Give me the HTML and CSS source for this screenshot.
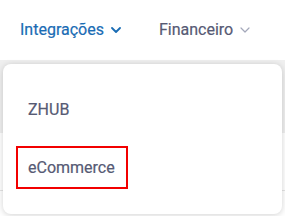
FILE: index.html
```html
<!DOCTYPE html>
<html lang="pt-BR">
<head>
  <meta charset="UTF-8" />
  <title>Menu Integrações</title>
  <link rel="stylesheet" href="styles.css">
</head>
<body>

  <nav class="topnav">
    <div class="nav-item active">
      Integrações
      <svg class="chevron" width="10" height="6" viewBox="0 0 10 6"><path d="M1 1l4 4 4-4" fill="none" stroke="currentColor" stroke-width="1.8" stroke-linecap="round" stroke-linejoin="round"/></svg>
    </div>
    <div class="nav-item">
      Financeiro
      <svg class="chevron light" width="10" height="6" viewBox="0 0 10 6"><path d="M1 1l4 4 4-4" fill="none" stroke="currentColor" stroke-width="1.2" stroke-linecap="round" stroke-linejoin="round"/></svg>
    </div>
  </nav>

  <div class="page">
    <div class="table-head"></div>
    <div class="table-row"></div>

    <div class="dropdown">
      <a class="menu-item">ZHUB</a>
      <a class="menu-item selected">eCommerce</a>
    </div>
  </div>

</body>
</html>
```

FILE: styles.css
```css
body {
  margin: 0;
  background: #fff;
  font-family: Roboto, "Noto Sans", sans-serif;
  overflow: hidden;
}

.topnav {
  display: flex;
  align-items: center;
  gap: 38px;
  padding: 9px 0 0 20px;
  height: 49px;
  box-sizing: border-box;
}

.nav-item {
  display: flex;
  align-items: center;
  gap: 7px;
  font-size: 16px;
  line-height: 19px;
  color: #565a74;
  -webkit-text-stroke: 0.2px currentColor;
}

.nav-item.active {
  color: #1a6cb4;
}

.chevron {
  margin-top: 2px;
}

.chevron.light {
  color: #a4a8ba;
}

.page {
  position: relative;
  height: 167px;
  padding-top: 11px;
  box-sizing: border-box;
}

.table-head {
  height: 73px;
  background: #efefef;
}

.table-row {
  height: 57px;
  border-bottom: 1px solid #e4e4e4;
}

.dropdown {
  position: absolute;
  top: 15px;
  left: 3px;
  width: 279px;
  height: 150px;
  box-sizing: border-box;
  padding: 24px 0 0 13px;
  background: #fff;
  border-radius: 8px;
  box-shadow: 0 1px 6px rgba(0,0,0,0.18);
  display: flex;
  flex-direction: column;
  align-items: flex-start;
  gap: 15px;
}

.menu-item {
  display: block;
  padding: 10px 11px 10px 10px;
  border: 2px solid transparent;
  font-size: 16px;
  line-height: 19px;
  color: #565a74;
  -webkit-text-stroke: 0.2px currentColor;
}

.menu-item.selected {
  border-color: #f20000;
}
```
